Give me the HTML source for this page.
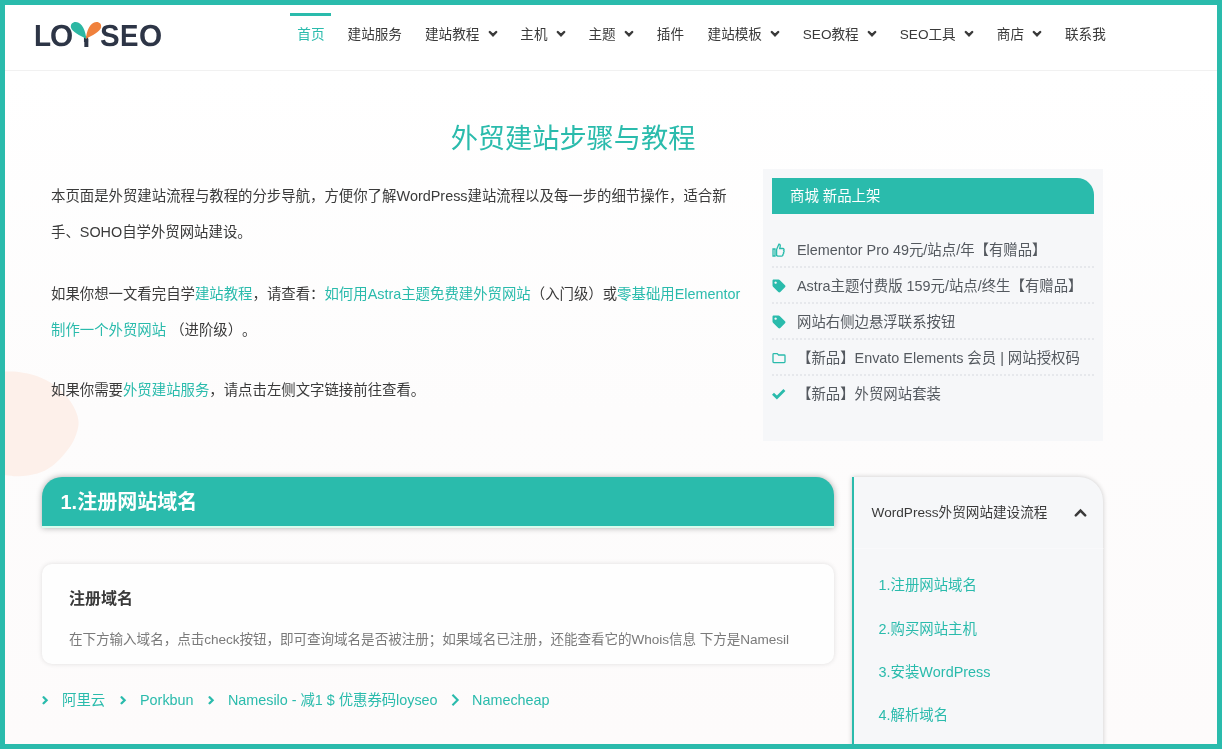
<!DOCTYPE html>
<html lang="zh-CN">
<head>
<meta charset="utf-8">
<title>外贸建站步骤与教程 - LOYSEO</title>
<style>
*{box-sizing:border-box;margin:0;padding:0}
html,body{width:1222px;height:749px;overflow:hidden}
body{font-family:"Liberation Sans","Noto Sans CJK SC",sans-serif;text-spacing-trim:space-all;font-kerning:none;color:#3a3a3a;background:#fff;position:relative;-webkit-font-smoothing:antialiased}
a{text-decoration:none;color:#2abbac}
.abs{position:absolute;white-space:nowrap}
#page{position:absolute;left:0;top:0;width:1222px;height:749px;overflow:hidden;will-change:transform}
#bg{position:absolute;left:0;top:0;width:1222px;height:749px;background:linear-gradient(180deg,#ffffff 0%,#ffffff 10%,#fdfcfc 55%,#fdfbfb 100%)}
#frame{position:absolute;left:0;top:0;width:1222px;height:749px;border:5px solid #2abbac;z-index:50;pointer-events:none}
#blob{position:absolute;left:0;top:365px}
#header{position:absolute;left:0;top:0;width:1222px;height:71px;background:#fff;border-bottom:1px solid #f1f1f1}
/* logo */
.lg{position:absolute;top:16px;font:bold 30.4px/40px "Liberation Sans",sans-serif;color:#2d3546;white-space:nowrap;transform-origin:0 0;text-rendering:geometricPrecision}
/* nav */
.nav{position:absolute;top:25px;height:20px;font-size:13.6px;line-height:20px;color:#3a3a3a;white-space:nowrap}
.nav.on{color:#2abbac}
#navbar{position:absolute;left:290px;top:13px;width:41px;height:3px;background:#2abbac}
.chev{position:absolute;top:30px;width:10px;height:8px}
h1{position:absolute;left:0;top:118px;width:1146px;text-align:center;font-size:27.2px;line-height:42px;font-weight:400;color:#2abbac;white-space:nowrap}
.p{position:absolute;left:51px;font-size:14.4px;line-height:36px;color:#3a3a3a;white-space:nowrap}
/* shop widget */
#shop{position:absolute;left:763px;top:169px;width:340px;height:272px;background:#f6f7f9}
#shop .hd{position:absolute;left:9px;top:9px;width:322px;height:36px;background:#2abbac;border-radius:0 17px 0 0;color:#fff;font-size:14.4px;line-height:37px;padding-left:18px}
#shop .it{position:absolute;left:9px;width:322px;height:36px;margin-top:1px;border-bottom:2px dotted #e6e8ec;font-size:14.4px;line-height:37px;color:#54595f;padding-left:25px;white-space:nowrap}
#shop .it.last{border-bottom:0}
#shop .it svg{position:absolute;left:0;top:10.7px;width:14px;height:14px;fill:#2abbac}
/* section heading */
#sec{position:absolute;left:42px;top:477px;width:792px;height:51px;background:#2abbac;border-bottom:2px solid #d9fcee;border-radius:20px 18px 0 0;box-shadow:0 0 6px rgba(0,0,0,.32);color:#fff;font-weight:700;font-size:20px;line-height:51px;padding-left:18.5px;white-space:nowrap}
#card{position:absolute;left:42px;top:564px;width:792px;height:100px;background:#fefefe;border-radius:10px;box-shadow:0 0 5px rgba(0,0,0,.12)}
#card h3{position:absolute;left:27px;top:22.5px;font-size:16px;line-height:24px;font-weight:700;color:#3a3a3a;white-space:nowrap}
#card p{position:absolute;left:27px;top:65px;font-size:13.6px;line-height:22px;color:#7a7a7a;white-space:nowrap;letter-spacing:-.07px}
.lk{position:absolute;top:689px;font-size:14.4px;line-height:22px;color:#2abbac;white-space:nowrap}
.lkc{position:absolute;top:695px;width:8px;height:11px}
/* toc */
#toc{position:absolute;left:852px;top:477px;width:251px;height:290px;background:#f6f7f9;border-left:2px solid #2abbac;border-radius:0 24px 0 0;box-shadow:0 0 5px rgba(0,0,0,.2)}
#toc .ln{position:absolute;left:0;top:71px;width:250px;height:1px;background:rgba(255,255,255,.3)}
#toc .t{position:absolute;left:17.4px;top:24.6px;font-size:13.6px;line-height:22px;color:#3a3a3a;white-space:nowrap}
#toc .i{position:absolute;left:24.5px;font-size:14.4px;line-height:22px;color:#2abbac;white-space:nowrap}
#toc svg{position:absolute;left:219.5px;top:31px;width:13px;height:9px}
</style>
</head>
<body>
<div id="page">
<div id="bg"></div>
<svg id="blob" width="100" height="120" viewBox="0 365 100 120"><path d="M-10.0 372.0 C-7.4 371.9 0.8 371.5 5.6 371.5 C10.4 371.5 13.4 371.2 18.7 372.0 C24.0 372.8 31.2 373.8 37.4 376.2 C43.6 378.6 50.4 382.0 56.0 386.4 C61.6 390.8 67.2 396.5 71.0 402.3 C74.8 408.1 77.9 415.1 78.5 421.0 C79.1 426.9 77.0 432.6 74.8 437.9 C72.6 443.2 69.2 448.1 65.4 452.8 C61.7 457.5 57.0 462.5 52.3 465.9 C47.6 469.3 43.0 471.7 37.4 473.4 C31.8 475.1 24.0 475.9 18.7 476.2 C13.4 476.5 10.4 475.4 5.6 475.2 C0.8 475.0 -7.4 475.0 -10.0 475.0Z" fill="#fdf0ea"/></svg>
<div id="header">
  <span class="lg" style="left:33.5px;transform:scaleX(.92)">L</span>
  <span class="lg" style="left:50.4px;transform:scaleX(.98)">O</span>
  <span class="lg" id="ly" style="left:76.7px;top:16.8px;transform:scaleX(.92);clip-path:inset(22px 0 0 0)">Y</span>
  <svg class="abs" style="left:68px;top:18px" width="36" height="24" viewBox="68 18 36 24">
    <rect x="83.95" y="36.5" width="4.1" height="5.5" fill="#2d3546"/>
    <path d="M86.3 38.9 C85.6 31 82.5 22.2 75.8 21.9 C72.5 21.8 70.4 24.2 70.9 27.2 C71.8 32 80 35.2 86.3 38.9Z" fill="#2cb7a3"/>
    <path d="M85.9 38.9 C86.6 31 89.7 22.2 96.4 21.9 C99.7 21.8 101.6 24.2 101.1 27.2 C100.2 32 92 35.2 85.9 38.9Z" fill="#f0813c"/>
  </svg>
  <span class="lg" style="left:99.9px;transform:scaleX(.97)">S</span>
  <span class="lg" style="left:119.9px;transform:scaleX(.91)">E</span>
  <span class="lg" style="left:138.8px;transform:scaleX(.98)">O</span>

  <div id="navbar"></div>
  <a class="nav on" style="left:297.3px">首页</a>
  <a class="nav" style="left:347.6px">建站服务</a>
  <a class="nav" style="left:425px">建站教程</a>
  <a class="nav" style="left:520.3px">主机</a>
  <a class="nav" style="left:588.5px">主题</a>
  <a class="nav" style="left:656.8px">插件</a>
  <a class="nav" style="left:707.6px">建站模板</a>
  <a class="nav" style="left:802.8px">SEO教程</a>
  <a class="nav" style="left:899.8px">SEO工具</a>
  <a class="nav" style="left:996.8px">商店</a>
  <a class="nav" style="left:1065px">联系我</a>
  <svg class="chev" style="left:487.8px" viewBox="0 0 10 8"><path d="M1.8 2 L5 5.2 L8.2 2" fill="none" stroke="#3a3a3a" stroke-width="2.4" stroke-linecap="round" stroke-linejoin="miter"/></svg>
  <svg class="chev" style="left:555.7px" viewBox="0 0 10 8"><path d="M1.8 2 L5 5.2 L8.2 2" fill="none" stroke="#3a3a3a" stroke-width="2.4" stroke-linecap="round" stroke-linejoin="miter"/></svg>
  <svg class="chev" style="left:624.2px" viewBox="0 0 10 8"><path d="M1.8 2 L5 5.2 L8.2 2" fill="none" stroke="#3a3a3a" stroke-width="2.4" stroke-linecap="round" stroke-linejoin="miter"/></svg>
  <svg class="chev" style="left:770.0px" viewBox="0 0 10 8"><path d="M1.8 2 L5 5.2 L8.2 2" fill="none" stroke="#3a3a3a" stroke-width="2.4" stroke-linecap="round" stroke-linejoin="miter"/></svg>
  <svg class="chev" style="left:866.8px" viewBox="0 0 10 8"><path d="M1.8 2 L5 5.2 L8.2 2" fill="none" stroke="#3a3a3a" stroke-width="2.4" stroke-linecap="round" stroke-linejoin="miter"/></svg>
  <svg class="chev" style="left:963.7px" viewBox="0 0 10 8"><path d="M1.8 2 L5 5.2 L8.2 2" fill="none" stroke="#3a3a3a" stroke-width="2.4" stroke-linecap="round" stroke-linejoin="miter"/></svg>
  <svg class="chev" style="left:1032.3px" viewBox="0 0 10 8"><path d="M1.8 2 L5 5.2 L8.2 2" fill="none" stroke="#3a3a3a" stroke-width="2.4" stroke-linecap="round" stroke-linejoin="miter"/></svg>
</div>
<h1>外贸建站步骤与教程</h1>
<p class="p" style="top:178px">本页面是外贸建站流程与教程的分步导航，方便你了解WordPress建站流程以及每一步的细节操作，适合新</p>
<p class="p" style="top:214px">手、SOHO自学外贸网站建设。</p>
<p class="p" style="top:276px">如果你想一文看完自学<a>建站教程</a>，请查看：<a>如何用Astra主题免费建外贸网站</a>（入门级）或<a>零基础用Elementor</a></p>
<p class="p" style="top:312px"><a>制作一个外贸网站</a> （进阶级）。</p>
<p class="p" style="top:372px">如果你需要<a>外贸建站服务</a>，请点击左侧文字链接前往查看。</p>

<div id="shop">
  <div class="hd">商城 新品上架</div>
  <div class="it" style="top:62px"><svg viewBox="0 0 14 14"><path d="M1 6h2v7H1z M4.6 6.4 L6.9 1.2 C8.3 1.2 8.5 2.6 8.1 3.8 L7.7 5.5 H10.8 C12.1 5.5 12.3 6.9 11.7 7.5 C12.3 8.1 12.1 9.1 11.5 9.5 C11.9 10.3 11.5 11.1 10.9 11.3 C11.1 12.3 10.5 13.1 9.6 13.1 H6.3 C5.6 13.1 5 12.7 4.6 12.5Z" fill="none" stroke="#2abbac" stroke-width="1.3"/></svg>Elementor Pro 49元/站点/年【有赠品】</div>
  <div class="it" style="top:98px"><svg viewBox="0 0 14 14"><path d="M0.5 1.8 C0.5 1 1 0.5 1.8 0.5 H6.6 C7 0.5 7.4 0.7 7.7 1 L13 6.3 C13.6 6.9 13.6 7.7 13 8.3 L8.3 13 C7.7 13.6 6.9 13.6 6.3 13 L1 7.7 C0.7 7.4 0.5 7 0.5 6.6Z M3.6 2.4 a1.2 1.2 0 1 0 0.01 0Z" fill-rule="evenodd"/></svg>Astra主题付费版 159元/站点/终生【有赠品】</div>
  <div class="it" style="top:134px"><svg viewBox="0 0 14 14"><path d="M0.5 1.8 C0.5 1 1 0.5 1.8 0.5 H6.6 C7 0.5 7.4 0.7 7.7 1 L13 6.3 C13.6 6.9 13.6 7.7 13 8.3 L8.3 13 C7.7 13.6 6.9 13.6 6.3 13 L1 7.7 C0.7 7.4 0.5 7 0.5 6.6Z M3.6 2.4 a1.2 1.2 0 1 0 0.01 0Z" fill-rule="evenodd"/></svg>网站右侧边悬浮联系按钮</div>
  <div class="it" style="top:170px"><svg viewBox="0 0 14 14"><path d="M1.8 2.6 H5.2 L6.6 4 H12.2 C12.7 4 13 4.3 13 4.8 V10.8 C13 11.3 12.7 11.6 12.2 11.6 H1.8 C1.3 11.6 1 11.3 1 10.8 V3.4 C1 2.9 1.3 2.6 1.8 2.6Z" fill="none" stroke="#2abbac" stroke-width="1.3"/></svg>【新品】Envato Elements 会员 | 网站授权码</div>
  <div class="it last" style="top:206px"><svg viewBox="0 0 14 14"><path d="M1 6.7 L4.9 10.5 L12.4 3" fill="none" stroke="#2abbac" stroke-width="2.8"/></svg>【新品】外贸网站套装</div>
</div>

<div id="sec">1.注册网站域名</div>
<div id="card">
  <h3>注册域名</h3>
  <p>在下方输入域名，点击check按钮，即可查询域名是否被注册；如果域名已注册，还能查看它的Whois信息 下方是Namesil</p>
</div>
<svg class="lkc" style="left:42px" viewBox="0 0 8 11"><path d="M1.6 2.2 L4.6 5.2 L1.6 8.2" fill="none" stroke="#2abbac" stroke-width="2.3" stroke-linecap="round" stroke-linejoin="miter"/></svg>
<a class="lk" style="left:62px">阿里云</a>
<svg class="lkc" style="left:119.5px" viewBox="0 0 8 11"><path d="M1.6 2.2 L4.6 5.2 L1.6 8.2" fill="none" stroke="#2abbac" stroke-width="2.3" stroke-linecap="round" stroke-linejoin="miter"/></svg>
<a class="lk" style="left:140px">Porkbun</a>
<svg class="lkc" style="left:207.8px" viewBox="0 0 8 11"><path d="M1.6 2.2 L4.6 5.2 L1.6 8.2" fill="none" stroke="#2abbac" stroke-width="2.3" stroke-linecap="round" stroke-linejoin="miter"/></svg>
<a class="lk" style="left:228px;letter-spacing:-.03px">Namesilo - 减1 $ 优惠券码loyseo</a>
<svg class="lkc" style="left:451.2px;top:694px;width:9px;height:12px" viewBox="0 0 9 12"><path d="M1.45 0.8 L6.65 6 L1.45 11.2" fill="none" stroke="#2abbac" stroke-width="2.1" stroke-linejoin="miter"/></svg>
<a class="lk" style="left:472px">Namecheap</a>

<div id="toc">
  <div class="t">WordPress外贸网站建设流程</div>
  <svg viewBox="0 0 13 9"><path d="M1.8 7.3 L6.5 2.6 L11.2 7.3" fill="none" stroke="#3a3a3a" stroke-width="2.5" stroke-linecap="round" stroke-linejoin="miter"/></svg>
  <div class="ln"></div>
  <a class="i" style="top:97px">1.注册网站域名</a>
  <a class="i" style="top:141px">2.购买网站主机</a>
  <a class="i" style="top:184px">3.安装WordPress</a>
  <a class="i" style="top:227px">4.解析域名</a>
</div>
<div id="frame"></div>
</div>
</body>
</html>
